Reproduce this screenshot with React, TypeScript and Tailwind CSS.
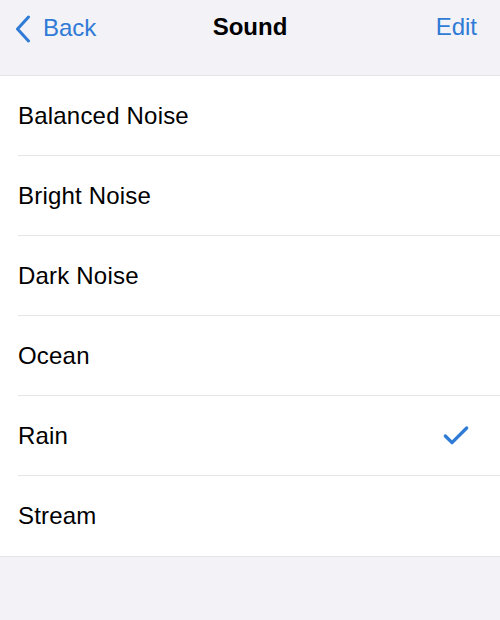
import { Check } from "lucide-react";

const sounds = ["Balanced Noise", "Bright Noise", "Dark Noise", "Ocean", "Rain", "Stream"];
const selected = "Rain";

export default function App() {
  return (
    <div className="flex h-[620px] w-[500px] flex-col bg-[#f2f2f7] font-['Liberation_Sans',sans-serif] text-black">
      {/* nav bar */}
      <header className="grid h-[76px] shrink-0 grid-cols-3 items-start border-b border-[#e4e4e9] pt-[12px]">
        <button type="button" className="flex items-center gap-[12px] pl-[15px] text-[24px] text-[#2f7bd6]">
          <svg width="16" height="28" viewBox="0 0 16 28" fill="none" aria-hidden>
            <path d="M13.5 2 L2.5 14 L13.5 26" stroke="currentColor" strokeWidth="3" strokeLinecap="round" strokeLinejoin="round" />
          </svg>
          <span className="-mt-[2px]">Back</span>
        </button>
        <h1 className="-mt-[3px] text-center text-[24px] font-bold">Sound</h1>
        <div className="-mt-[3px] flex justify-end pr-[23px]">
          <button type="button" className="text-[24px] text-[#2f7bd6]">
            Edit
          </button>
        </div>
      </header>

      {/* list */}
      <ul className="border-b border-[#e4e4e9] bg-white">
        {sounds.map((name, i) => (
          <li key={name} className="pl-[18px]">
            <div
              className={
                "flex h-[80px] items-center justify-between pr-[28px] " +
                (i < sounds.length - 1 ? "border-b border-[#e6e6ea]" : "")
              }
            >
              <span className="text-[24px] tracking-[0.2px]">{name}</span>
              {name === selected ? <Check className="h-[32px] w-[32px] text-[#2f7bd6]" strokeWidth={2.5} /> : null}
            </div>
          </li>
        ))}
      </ul>
    </div>
  );
}
